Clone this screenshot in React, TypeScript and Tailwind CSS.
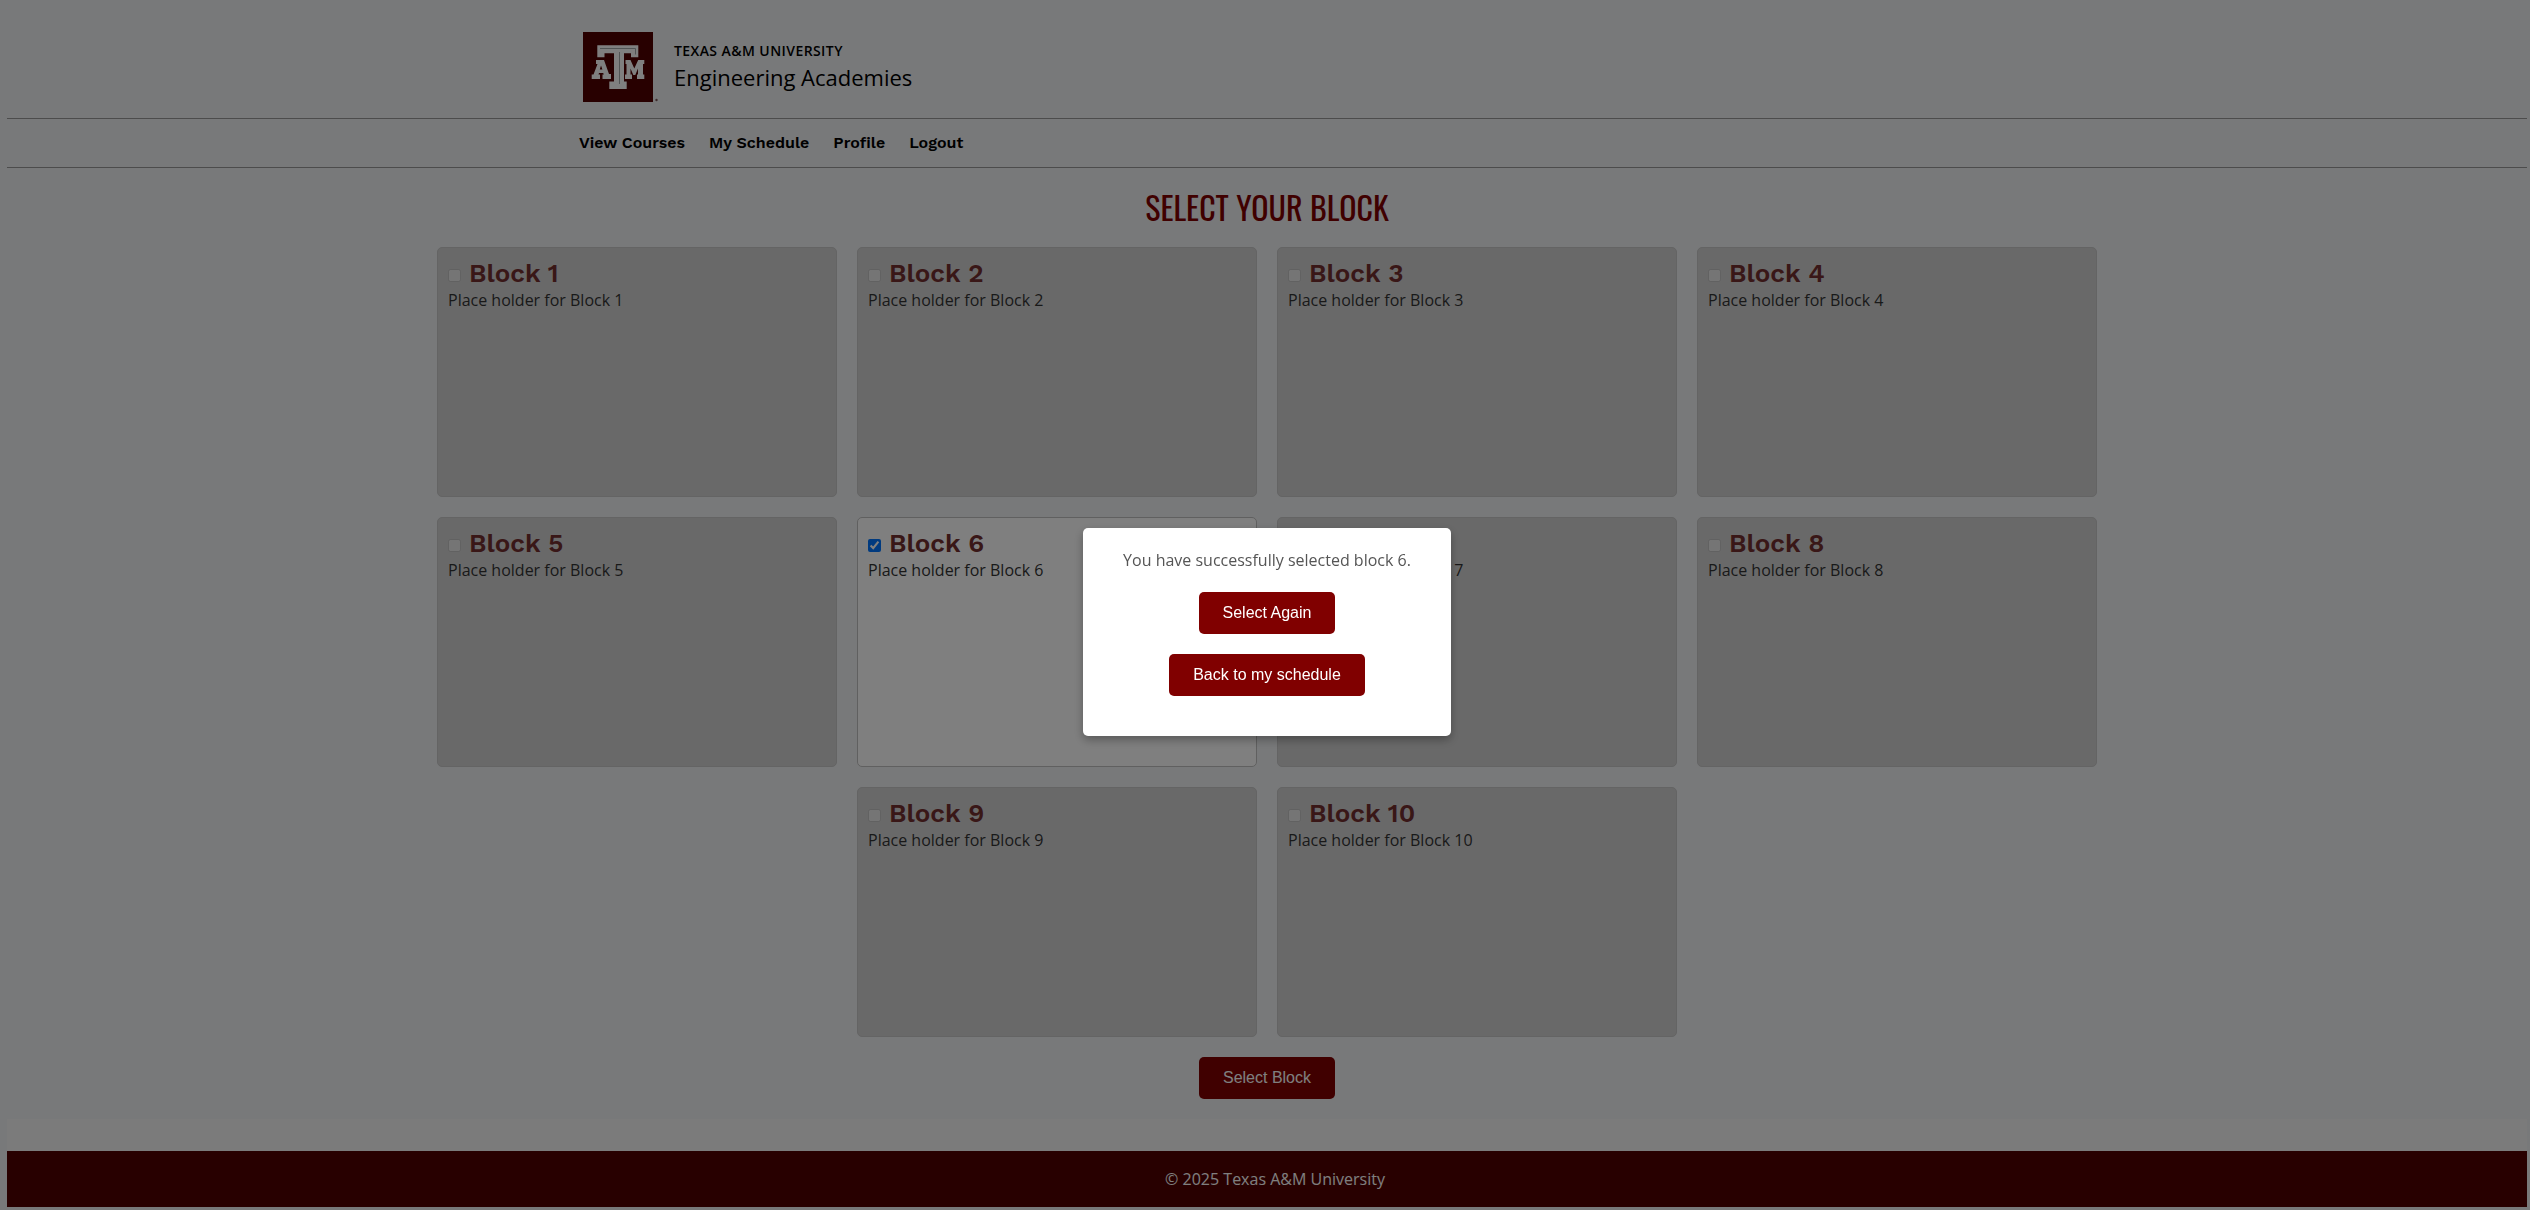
const blocks = [1, 2, 3, 4, 5, 6, 7, 8, 9, 10];
const selectedBlock = 6;

const navLinks = ["View Courses", "My Schedule", "Profile", "Logout"];

const maroonButton =
  "rounded-[5px] bg-[#800000] px-6 h-[42px] font-['Liberation_Sans',sans-serif] text-base text-white";

function Logo() {
  return (
    <svg viewBox="0 0 75 70" className="h-[70px] w-[75px]" aria-hidden="true">
      <rect width="70" height="70" fill="#500000" />
      <g fill="#ffffff">
        <path
          d="M13 28H21L26 42H28V47H19.500V42.500H20.800L20.200 41H16L15.500 42.500H17V47H8.700V42.500H10.500L14.500 32H13ZM18 33.500L16.800 37.500H19.400Z"
          fillRule="evenodd"
        />
        <path d="M42.500 28H47.500L51.300 36.500L55.200 28H61.300V32H60V42.500H61.300V47H54V42.500H55V36.500L52.300 43H50.300L47.500 36.500V42.500H49V47H42V42.500H43.500V32H42.500Z" />
        <path
          d="M14.300 13.300H55.300V25.300H48V21.300H41V49.500H43.700V57H26.300V49.500H31V21.300H21.500V25.300H14.300Z"
          stroke="#500000"
          strokeWidth="2"
          paintOrder="stroke"
        />
      </g>
      <path
        d="M17 16.500H52.500V22.500M36.500 20V52"
        fill="none"
        stroke="#a4abab"
        strokeWidth="1"
      />
      <circle cx="73.500" cy="68" r="1.200" fill="#7d5a5a" />
    </svg>
  );
}

function BlockCard({ block }: { block: number }) {
  const selected = block === selectedBlock;
  return (
    <section
      className={`h-[250px] w-[400px] rounded-[5px] border px-2.5 py-3 ${
        selected ? "border-[#c0c0c0] bg-white" : "border-[#c8c8c8] bg-[#d3d3d3]"
      }`}
    >
      <div className="mb-0.5 flex items-center gap-2">
        <input
          id={`block-${block}`}
          type="checkbox"
          defaultChecked={selected}
          disabled={!selected}
          className="mt-1 size-[13px]"
        />
        <label
          htmlFor={`block-${block}`}
          className="font-['Work_Sans','Inter',sans-serif] text-[26px] leading-[26px] font-semibold text-[#732f2f]"
        >
          Block {block}
        </label>
      </div>
      <p className="leading-6 text-[#333333]">Place holder for Block {block}</p>
    </section>
  );
}

export default function App() {
  return (
    <div className="min-h-screen bg-[#f1f3f5] pr-[3px] pb-[3px] pl-[7px] font-['Open_Sans',sans-serif] text-base text-black">
      <header>
        <div className="border-b border-[#999999] pt-8 pb-4">
          <div className="mx-auto flex max-w-[1400px] items-center gap-4 px-4">
            <Logo />
            <div>
              <p className="text-sm leading-5 font-semibold tracking-[0.03em]">TEXAS A&amp;M UNIVERSITY</p>
              <p className="text-[22px] leading-8">Engineering Academies</p>
            </div>
          </div>
        </div>
        <nav className="border-b border-[#999999] py-3">
          <div className="mx-auto flex max-w-[1400px]">
            {navLinks.map((link) => (
              <a key={link} href="#" className="px-3 font-['Work_Sans','Inter',sans-serif] leading-6 font-semibold">
                {link}
              </a>
            ))}
          </div>
        </nav>
      </header>

      <main className="flex flex-col items-center gap-5 py-5">
        <h1 className="mb-0.5 font-['Oswald','Roboto_Condensed',sans-serif] text-[32px] leading-[37px] text-[#800000]">
          SELECT YOUR BLOCK
        </h1>
        <div className="flex max-w-[1680px] flex-wrap justify-center gap-5">
          {blocks.map((block) => (
            <BlockCard key={block} block={block} />
          ))}
        </div>
        <button type="button" className={maroonButton}>
          Select Block
        </button>
      </main>

      <footer className="border-t-[32px] border-[#f6f6f6] bg-[#500000] py-4 text-center leading-6 text-white">
        <span className="pl-4">© 2025 Texas A&amp;M University</span>
      </footer>

      <div className="fixed inset-0 flex items-center justify-center bg-black/50 pt-[54px] pl-1">
        <div
          role="dialog"
          aria-modal="true"
          aria-label="Block selected"
          className="flex flex-col items-center gap-5 rounded-[5px] bg-white px-10 pt-5 pb-10 shadow-[0_4px_10px_rgba(0,0,0,0.3)]"
        >
          <p className="leading-6 text-[#555555]">You have successfully selected block {selectedBlock}.</p>
          <button type="button" className={maroonButton}>
            Select Again
          </button>
          <button type="button" className={maroonButton}>
            Back to my schedule
          </button>
        </div>
      </div>
    </div>
  );
}
